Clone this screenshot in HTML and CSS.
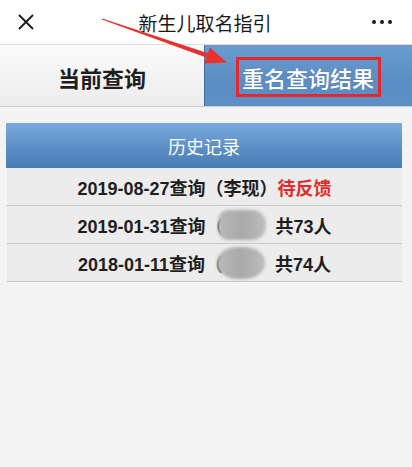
FILE: index.html
```html
<!DOCTYPE html>
<html lang="zh-CN">
<head>
<meta charset="utf-8">
<title>新生儿取名指引</title>
<link rel="stylesheet" href="styles.css">
</head>
<body>
<div class="page">
  <header class="nav">
    <svg class="close" width="16" height="16" viewBox="0 0 16 16"><path d="M1 1L15 15M15 1L1 15" stroke="#1a1a1a" stroke-width="1.8" fill="none"/></svg>
    <div class="title">新生儿取名指引</div>
    <div class="more"><i></i><i></i><i></i></div>
  </header>
  <nav class="tabs">
    <div class="tab tab-left">当前查询</div>
    <div class="tab tab-right"><span class="mark">重名查询结果</span></div>
  </nav>
  <section class="history">
    <div class="history-head">历史记录</div>
    <div class="row">2019-08-27查询（李现）<span class="pending">待反馈</span></div>
    <div class="row">2019-01-31查询（<span class="blob"></span><span class="count">共73人</span></div>
    <div class="row">2018-01-11查询（<span class="blob blob-round"></span><span class="count">共74人</span></div>
  </section>
  <svg class="arrow" width="412" height="120" viewBox="0 0 412 120">
    <polygon points="102.2,18.4 101.8,19.6 206.2,57.6 208,53.2" fill="#e8322e"/>
    <polygon points="227,62.5 209.9,47.4 204.3,63.4" fill="#e8322e"/>
  </svg>
</div>
</body>
</html>
```
FILE: styles.css
```css
html, body {
  margin: 0;
  padding: 0;
}
body {
  background: #f3f3f3;
  font-family: "Liberation Sans", "Noto Sans CJK SC", sans-serif;
  color: #1e1e1e;
  width: 412px;
  height: 467px;
  overflow: hidden;
}
.page {
  position: relative;
  height: 467px;
}
.nav {
  height: 44px;
  background: #ffffff;
  border-bottom: 1px solid #dcdcdc;
  display: flex;
  align-items: center;
  justify-content: space-between;
  padding: 0 20px 0 18px;
}
.close {
  display: block;
}
.title {
  font-family: "Noto Sans CJK SC", sans-serif;
  font-size: 19px;
  color: #1a1a1a;
  margin-left: 4px;
}
.more {
  display: flex;
  gap: 4px;
  width: 20px;
}
.more i {
  display: block;
  width: 4px;
  height: 4px;
  border-radius: 50%;
  background: #1a1a1a;
}
.tabs {
  display: flex;
  height: 61px;
  border-bottom: 1px solid #cfcfcf;
}
.tab {
  display: flex;
  align-items: center;
  justify-content: center;
  font-family: "Noto Sans CJK SC", sans-serif;
  font-size: 22px;
}
.tab-left {
  width: 204px;
  background: linear-gradient(#fbfbfb, #ececec);
  font-weight: bold;
  color: #1e1e1e;
  padding-top: 2px;
}
.tab-right {
  flex: 1;
  background: linear-gradient(#6a9cd0, #5b8cc3 60%, #5e90c6);
  border-left: 1px solid #3f6c9c;
  color: #ffffff;
  font-weight: 500;
  padding-top: 2px;
  text-shadow: 0 0 1px rgba(0,0,0,0.25);
}
.mark {
  display: block;
  border: 3px solid #e3292d;
  line-height: 34px;
  padding: 0 4px 0 3px;
}
.history {
  margin: 16px 10px 0 6px;
  background: #ececec;
}
.history-head {
  height: 45px;
  background: linear-gradient(#78aadc, #5f91c8 50%, #4a7cb4);
  color: #ffffff;
  font-family: "Noto Sans CJK SC", sans-serif;
  font-size: 18px;
  display: flex;
  align-items: center;
  justify-content: center;
}
.row {
  height: 37px;
  border-bottom: 1px solid #c8c8c8;
  border-left: 1px solid #f7f7f7;
  display: flex;
  align-items: center;
  justify-content: center;
  font-size: 18px;
  font-weight: bold;
  color: #1e1e1e;
  white-space: pre;
}
.pending {
  color: #e02b2b;
}
.blob {
  display: inline-block;
  width: 48px;
  height: 30px;
  margin-left: -6px;
  margin-right: 10px;
  background: linear-gradient(90deg, #b9b9b9, #a9a9a9 50%, #bdbdbd);
  border-radius: 10px 14px 14px 10px;
  filter: blur(1.5px);
}
.blob-round {
  border-radius: 45%;
  height: 32px;
}
.count {
  font-weight: bold;
}
.arrow {
  position: absolute;
  left: 0;
  top: 0;
  pointer-events: none;
}
```
